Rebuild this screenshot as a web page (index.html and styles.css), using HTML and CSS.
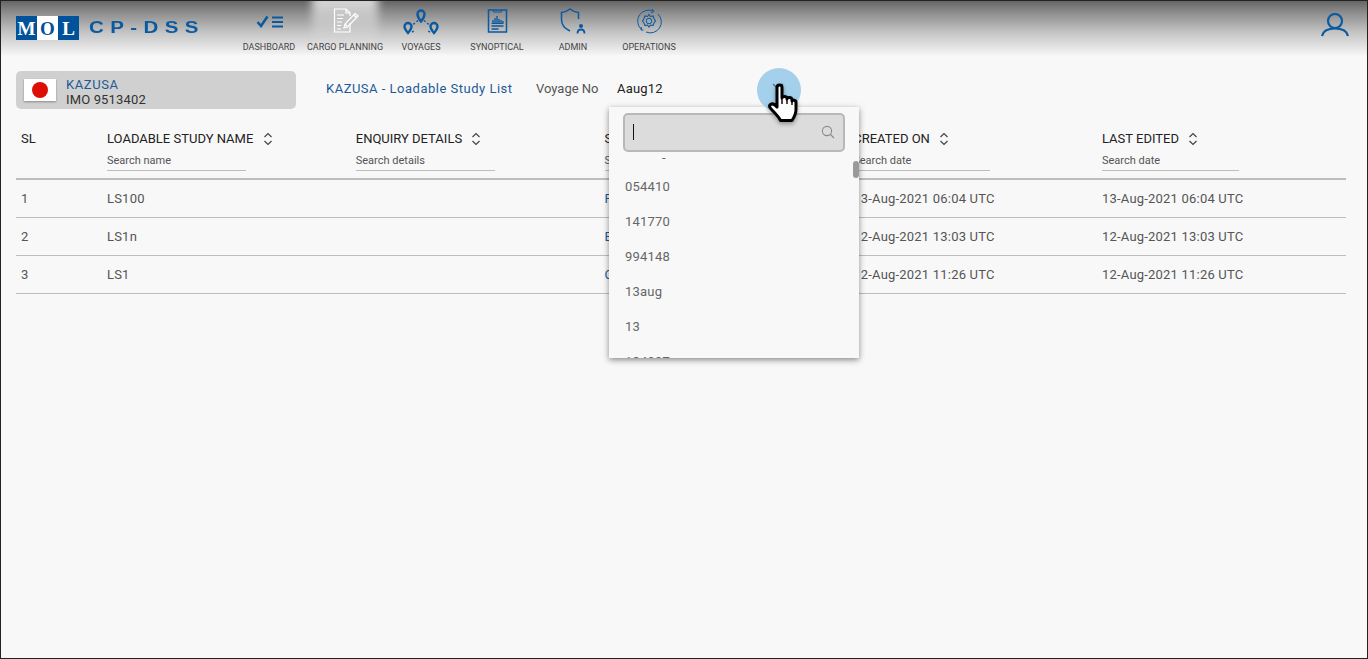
FILE: index.html
```html
<!DOCTYPE html>
<html lang="en">
<head>
<meta charset="utf-8">
<title>CP-DSS Loadable Study List</title>
<link rel="stylesheet" href="styles.css">
</head>
<body>
<div class="frame">
  <header class="topbar">
    <div class="brand">
      <div class="mol"><span>M</span><span class="mol-o">O</span><span>L</span></div>
      <div class="cpdss">CP-DSS</div>
    </div>
    <nav class="nav">
      <a class="nav-item">
        <svg class="nav-icon" width="30" height="30" viewBox="0 0 30 30"><path d="M3.500 16l3.500 4 6.500-9.500" fill="none" stroke="#0b5aa0" stroke-width="2.600"/><path d="M18 11.500h11M18 16h11M18 20.500h11" stroke="#0b5aa0" stroke-width="2" fill="none"/></svg>
        <span>DASHBOARD</span>
      </a>
      <a class="nav-item nav-active">
        <svg class="nav-icon" width="30" height="30" viewBox="0 0 30 30" fill="none" stroke="#fff" stroke-width="1.200"><path d="M20 17v9H4.500V3H16l4 4v3"/><path d="M16 3v4h4"/><path d="M7 9h7M7 12.500h6M7 16h5M7 19.500h4M7 23h4"/><path d="M14 22l1-4L25 7.500l3 2.500L17.500 21z"/><path d="M15 18l2.500 3M23.500 9l3 2.500"/></svg>
        <span>CARGO PLANNING</span>
      </a>
      <a class="nav-item">
        <svg class="nav-icon" width="36" height="30" viewBox="0 0 36 30"><g fill="none" stroke="#0b5aa0" stroke-width="2.400"><path d="M18 15.500c-2.500-3-3.500-5-3.500-7.500a3.500 3.500 0 017 0c0 2.500-1 4.500-3.500 7.500z"/><path d="M5 27c-2.500-3-3.500-4.500-3.500-6.500a3.500 3.500 0 017 0c0 2-1 3.500-3.500 6.500z"/><path d="M31 27c-2.500-3-3.500-4.500-3.500-6.500a3.500 3.500 0 017 0c0 2-1 3.500-3.500 6.500z"/></g><path d="M15 14.500l-5.500 4.500M21 14.500l5.500 4.500M9 26l3-1.500M27 26l-3-1.500" fill="none" stroke="#0b5aa0" stroke-width="1.500" stroke-dasharray="2 2"/></svg>
        <span>VOYAGES</span>
      </a>
      <a class="nav-item">
        <svg class="nav-icon" width="30" height="30" viewBox="0 0 30 30" fill="none" stroke="#0b5aa0"><rect x="6.500" y="4" width="18" height="22" stroke-width="1.500"/><path d="M11.500 4v2h8V4" stroke-width="1"/><path d="M9.500 17.500h12" stroke-width="1"/><path d="M11 17v-3M13 17v-5M15 17v-7M17 17v-4M19 17v-3M21 17v-2" stroke-width="1.400"/><path d="M9.500 20h12M9.500 23h7" stroke-width="1.300"/></svg>
        <span>SYNOPTICAL</span>
      </a>
      <a class="nav-item">
        <svg class="nav-icon" width="30" height="30" viewBox="0 0 30 30" fill="none" stroke="#0b5aa0" stroke-width="1.500"><path d="M12 25C6.500 22.500 3.500 19 3.500 13.500V6.500C7 6 9.500 5 12 3c2.500 2 5 3 8.500 3.500V13"/><circle cx="23" cy="20" r="2" fill="#0b5aa0" stroke="none"/><path d="M19.500 27.500c0-2.500 1.500-4 3.500-4s3.500 1.500 3.500 4" stroke-width="1.800"/></svg>
        <span>ADMIN</span>
      </a>
      <a class="nav-item">
        <svg class="nav-icon" width="30" height="30" viewBox="0 0 30 30" fill="none" stroke="#0b5aa0" stroke-width="1"><path d="M7 23A11 11 0 0119 5M24 8A11 11 0 0112 26"/><path d="M18 3l2 2.500-3 1.500M9.500 24l-2.500 0 .5-3" /><circle cx="15" cy="15" r="2.800"/><path d="M15 8.500l1.500 2 2.500-.5 1 2.500 1.500 2.500-1.500 2-1 2.500-2.500-.5-1.500 2-1.500-2-2.500.5-1-2.500-1.500-2 1.500-2.500 1-2.500 2.500.5z" stroke-width="1.100"/></svg>
        <span>OPERATIONS</span>
      </a>
    </nav>
    <svg class="user" width="30" height="26" viewBox="0 0 30 26" fill="none" stroke="#0b5aa0" stroke-width="2.200"><circle cx="15" cy="8" r="7"/><path d="M2 23c1-5 6-7.500 13-7.500s12 2.500 13 7.500"/></svg>
  </header>

  <section class="toolbar">
    <div class="vessel">
      <div class="flag"><i class="sun"></i></div>
      <div class="vessel-text">
        <div class="vessel-name">KAZUSA</div>
        <div class="vessel-imo">IMO 9513402</div>
      </div>
    </div>
    <div class="page-title">KAZUSA - Loadable Study List</div>
    <div class="voyage-label">Voyage No</div>
    <div class="voyage-value">Aaug12</div>
  </section>

  <section class="table">
    <div class="row head">
      <div class="cell c-sl"><div class="th">SL</div></div>
      <div class="cell c-a"><div class="th">LOADABLE STUDY NAME <svg class="sort" width="10" height="14" viewBox="0 0 10 14"><path d="M1.500 5L5 1.500 8.500 5M1.500 9L5 12.500 8.500 9" fill="none" stroke="#444" stroke-width="1.200"/></svg></div><div class="search">Search name</div></div>
      <div class="cell c-a"><div class="th">ENQUIRY DETAILS <svg class="sort" width="10" height="14" viewBox="0 0 10 14"><path d="M1.500 5L5 1.500 8.500 5M1.500 9L5 12.500 8.500 9" fill="none" stroke="#444" stroke-width="1.200"/></svg></div><div class="search">Search details</div></div>
      <div class="cell c-a"><div class="th">STATUS</div><div class="search">Search</div></div>
      <div class="cell c-a"><div class="th">CREATED ON <svg class="sort" width="10" height="14" viewBox="0 0 10 14"><path d="M1.500 5L5 1.500 8.500 5M1.500 9L5 12.500 8.500 9" fill="none" stroke="#444" stroke-width="1.200"/></svg></div><div class="search search-date">Search date</div></div>
      <div class="cell c-c"><div class="th">LAST EDITED <svg class="sort" width="10" height="14" viewBox="0 0 10 14"><path d="M1.500 5L5 1.500 8.500 5M1.500 9L5 12.500 8.500 9" fill="none" stroke="#444" stroke-width="1.200"/></svg></div><div class="search search-date">Search date</div></div>
    </div>
    <div class="row body">
      <div class="cell c-sl">1</div><div class="cell c-a">LS100</div><div class="cell c-a"></div><div class="cell c-a status">Plan</div><div class="cell c-a">13-Aug-2021 06:04 UTC</div><div class="cell c-c">13-Aug-2021 06:04 UTC</div>
    </div>
    <div class="row body">
      <div class="cell c-sl">2</div><div class="cell c-a">LS1n</div><div class="cell c-a"></div><div class="cell c-a status">Executed</div><div class="cell c-a">12-Aug-2021 13:03 UTC</div><div class="cell c-c">12-Aug-2021 13:03 UTC</div>
    </div>
    <div class="row body">
      <div class="cell c-sl">3</div><div class="cell c-a">LS1</div><div class="cell c-a"></div><div class="cell c-a status">Confirmed</div><div class="cell c-a">12-Aug-2021 11:26 UTC</div><div class="cell c-c">12-Aug-2021 11:26 UTC</div>
    </div>
  </section>

  <div class="dropdown">
    <div class="dd-search">
      <span class="caret"></span>
      <svg class="dd-glass" width="14" height="14" viewBox="0 0 14 14" fill="none" stroke="#8a8a8a" stroke-width="1.100"><circle cx="6" cy="6" r="4.600"/><path d="M9.500 9.500l3.500 3.500"/></svg>
    </div>
    <div class="dd-list">
      <div class="dd-dash">-</div>
      <div class="dd-item">054410</div>
      <div class="dd-item">141770</div>
      <div class="dd-item">994148</div>
      <div class="dd-item">13aug</div>
      <div class="dd-item">13</div>
      <div class="dd-item">134997</div>
    </div>
    <div class="dd-thumb"></div>
  </div>

  <div class="pointer">
    <svg class="chev" width="12" height="8" viewBox="0 0 12 8"><path d="M1 1l5 5 5-5" fill="none" stroke="#4a6f8c" stroke-width="1.200"/></svg>
    <svg class="hand" width="34" height="42" viewBox="0 0 34 42"><path d="M10 24V4.500a2.500 2.500 0 015 0V15c.5-2 4.500-2 5 0v1c.5-2 4.500-2 5 .5v1.500c.5-1.500 4-1 4 1.500v7c0 5-2 8-4 11H13.500c-2-4-5-7-8.500-10.500-2-2-3.500-4-1.500-5.500 2-1.500 4.500 0 6.500 2.500z" fill="#fff" stroke="#000" stroke-width="3" stroke-linejoin="round"/><path d="M15 15v6M20 16v5M25 18v4" stroke="#000" stroke-width="1.400"/></svg>
  </div>
</div>
</body>
</html>
```
FILE: styles.css
```css
* { box-sizing: border-box; }
html, body { margin: 0; padding: 0; height: 100%; overflow: hidden; }
body { font-family: Roboto, "Liberation Sans", sans-serif; background: #f8f8f8; color: #555; }

.frame {
  position: relative;
  height: 659px;
  border: 1px solid #222;
  background: #f8f8f8;
  overflow: hidden;
}

/* top bar */
.topbar {
  position: relative;
  display: flex;
  height: 55px;
  background: linear-gradient(#666 0, #8e8e8e 12px, #c6c6c6 32px, #f0f0f0 52px, #f8f8f8 55px);
}
.brand { display: flex; align-items: flex-start; width: 230px; padding: 15px 0 0 15px; }
.mol {
  display: flex;
  flex: none;
  width: 63px;
  height: 24px;
  background: #00529b;
  color: #fff;
  font: bold 19px/25px "Liberation Serif", serif;
}
.mol span { flex: 1; text-align: center; }
.mol .mol-o { background: #fff; color: #00529b; }
.cpdss {
  margin: 2px 0 0 10px;
  font: bold 16px/20px "Liberation Sans", sans-serif;
  letter-spacing: 5px;
  color: #0b5aa0;
  white-space: nowrap;
  transform: scaleX(1.28);
  transform-origin: left center;
}
.nav { display: flex; }
.nav-item {
  position: relative;
  display: flex;
  flex-direction: column;
  align-items: center;
  width: 76px;
  height: 55px;
  padding-top: 5px;
  font-size: 9px;
  line-height: 12px;
  color: #444;
  white-space: nowrap;
}
.nav-icon { display: block; height: 30px; margin-bottom: 5px; }
.nav-item span { position: relative; }
.nav-active::before {
  content: "";
  position: absolute;
  left: 5px;
  right: 5px;
  top: -6px;
  height: 48px;
  background: linear-gradient(rgba(240,240,240,.95), rgba(240,240,240,0));
  filter: blur(4px);
}
.nav-active .nav-icon { position: relative; }
.user { position: absolute; right: 17px; top: 12px; }

/* toolbar */
.toolbar { display: flex; align-items: center; height: 38px; margin-top: 15px; padding-left: 15px; font-size: 13px; }
.vessel {
  display: flex;
  align-items: center;
  width: 280px;
  height: 38px;
  padding-left: 8px;
  background: #d0d0d0;
  border-radius: 5px;
}
.flag {
  display: flex;
  align-items: center;
  justify-content: center;
  width: 32px;
  height: 22px;
  background: #fff;
  box-shadow: 0 1px 2px rgba(0,0,0,.35);
}
.sun { width: 16px; height: 16px; border-radius: 50%; background: #dd0f05; }
.vessel-text { margin-left: 10px; padding-top: 3px; line-height: 15px; letter-spacing: .15px; }
.vessel-name { color: #1e5a96; letter-spacing: .6px; }
.vessel-imo { color: #333; }
.page-title { margin: 0 0 4px 30px; width: 210px; color: #1e5a96; letter-spacing: .5px; }
.voyage-label { width: 81px; margin-bottom: 4px; color: #555; }
.voyage-value { margin-bottom: 4px; color: #222; letter-spacing: .2px; }

/* table */
.table { margin: 0 21px 0 15px; }
.row { display: flex; }
.head { height: 71px; padding-top: 22px; border-bottom: 2px solid #bdbdbd; }
.body { height: 38px; align-items: center; border-bottom: 1px solid #bdbdbd; font-size: 13px; letter-spacing: .2px; }
.c-sl { width: 91px; padding-left: 5px; }
.c-a { width: 248.750px; }
.c-c { flex: 1; }
.status { color: #1e5a96; }
.th { font-size: 13px; line-height: 16px; color: #222; white-space: nowrap; }
.sort { margin-left: 6px; vertical-align: -3px; }
.search {
  width: 139px;
  margin-top: 7px;
  height: 17px;
  font-size: 11px;
  line-height: 14px;
  color: #555;
  border-bottom: 1px solid #bdbdbd;
}
.search-date { width: 137px; }

/* dropdown */
.dropdown {
  position: absolute;
  left: 608px;
  top: 106px;
  width: 250px;
  height: 251px;
  background: #f8f8f8;
  box-shadow: 0 2px 6px rgba(0,0,0,.45);
}
.dd-search {
  position: relative;
  margin: 6px 14px 0 14px;
  height: 39px;
  background: #dcdcdc;
  border: 2px solid #b8b8b8;
  border-radius: 5px;
}
.caret { position: absolute; left: 8px; top: 9px; width: 1px; height: 16px; background: #111; }
.dd-glass { position: absolute; right: 8px; top: 10px; }
.dd-list { height: 206px; overflow: hidden; font-size: 13px; letter-spacing: .2px; color: #666; padding-left: 16px; }
.dd-dash { height: 17px; padding-left: 37px; line-height: 12px; }
.dd-item { height: 35px; line-height: 35px; }
.dd-thumb { position: absolute; right: 0; top: 54px; width: 6px; height: 17px; border-radius: 3px; background: #9a9a9a; }

/* pointer */
.pointer {
  position: absolute;
  left: 756px;
  top: 67px;
  width: 44px;
  height: 44px;
  border-radius: 50%;
  background: #a5d0ec;
}
.chev { position: absolute; left: 15px; top: 15px; }
.hand { position: absolute; left: 10px; top: 15px; filter: drop-shadow(0 2px 2px rgba(0,0,0,.35)); }
```
